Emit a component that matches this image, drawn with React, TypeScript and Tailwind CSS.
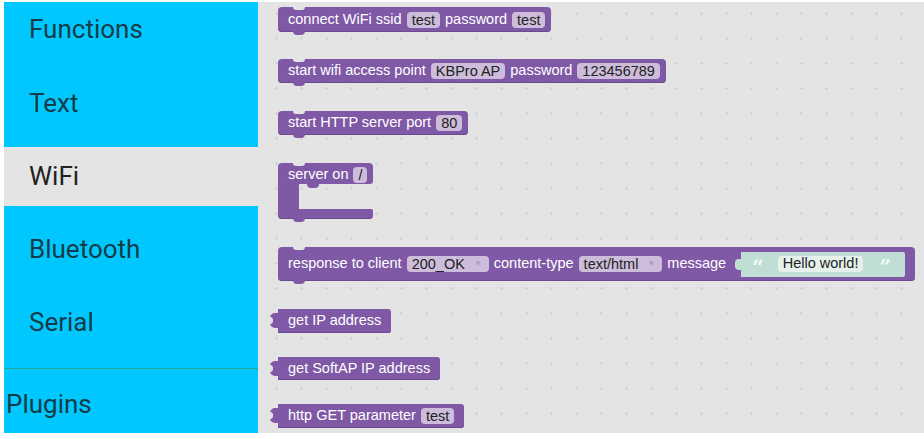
import React from "react";

const Pill = ({ children, arrow }: { children: React.ReactNode; arrow?: boolean }) => (
  <span className="inline-flex items-center h-[16px] rounded-[4px] bg-[#cdbddb] px-[5px] text-[#222] leading-[16px]">
    {children}
    {arrow && <span className="ml-[9px] mr-[2px] text-[8px] text-[#ab9ac3]">▼</span>}
  </span>
);

// statement block: notch on top, bump below
const Stmt = ({ children, h = "h-[25px]", mt }: { children: React.ReactNode; h?: string; mt: string }) => (
  <div className={`relative ${mt} ${h} w-fit flex items-center gap-[5px] rounded-[4px] bg-[#8059a6] pl-[10px] pr-[6px] shadow-[inset_0_-1px_0_#6b4a8f]`}>
    <span className="absolute left-[15px] top-0 w-[12px] h-[3px] rounded-b-[4px] bg-[#e4e4e4]" />
    <span className="absolute left-[15px] -bottom-[3px] w-[12px] h-[4px] rounded-b-[4px] bg-[#8059a6]" />
    {children}
  </div>
);

// value block: output tab on the left
const Value = ({ children, h = "h-[24px]", mt }: { children: React.ReactNode; h?: string; mt: string }) => (
  <div className={`relative ${mt} ${h} w-fit flex items-center gap-[5px] rounded-r-[3px] bg-[#8059a6] pl-[10px] pr-[10px] shadow-[inset_0_-1px_0_#6b4a8f]`}>
    <span className="absolute -left-[8px] top-[4px] w-[9px] h-[15px] rounded-l-[5px] bg-[#8059a6]" />
    <span className="absolute -left-[9px] top-[8px] w-[4px] h-[7px] rounded-r-[3px] bg-[#e4e4e4]" />
    {children}
  </div>
);

export default function App() {
  const menu = "text-[26px] leading-[30px] font-['Roboto',sans-serif]";
  return (
    <div className="w-[924px] h-[439px] bg-white pl-[4px] pt-[2px] pb-[6px] flex">
      {/* toolbox */}
      <div className="w-[254px] h-full flex flex-col">
        <div className="h-[145px] bg-[#00c8ff] pl-[25px] pt-[12px]">
          <div className={`${menu} text-[#143c48]`}>Functions</div>
          <div className={`${menu} text-[#143c48] mt-[44px]`}>Text</div>
        </div>
        <div className="h-[59px] bg-[#e4e4e4] pl-[25px] pt-[14px]">
          <div className={`${menu} text-[#222]`}>WiFi</div>
        </div>
        <div className="h-[162px] bg-[#00c8ff] pl-[25px] pt-[28px]">
          <div className={`${menu} text-[#143c48]`}>Bluetooth</div>
          <div className={`${menu} text-[#143c48] mt-[43px]`}>Serial</div>
        </div>
        <div className="h-[1px] bg-[#2aa79b]" />
        <div className="flex-1 bg-[#00c8ff] pl-[2px] pt-[20px]">
          <div className={`${menu} text-[#143c48]`}>Plugins</div>
        </div>
      </div>

      {/* workspace */}
      <div className="flex-1 h-full bg-[#e4e4e4] bg-[image:radial-gradient(circle,#d0d0d0_1px,transparent_1.5px)] bg-[length:25px_25px] bg-[position:6px_-1px] pl-[20px] flex flex-col font-['Liberation_Sans',Arial,sans-serif] text-[14.5px] text-white whitespace-nowrap">
        <Stmt mt="mt-[5px]">
          <span>connect WiFi ssid</span>
          <Pill>test</Pill>
          <span>password</span>
          <Pill>test</Pill>
        </Stmt>

        <Stmt mt="mt-[27px]" h="h-[24px]">
          <span>start wifi access point</span>
          <Pill>KBPro AP</Pill>
          <span>password</span>
          <Pill>123456789</Pill>
        </Stmt>

        <Stmt mt="mt-[28px]" h="h-[24px]">
          <span>start HTTP server port</span>
          <Pill>80</Pill>
        </Stmt>

        {/* C-shaped block */}
        <div className="relative mt-[28px] w-[95px] h-[56px] flex flex-col">
          <span className="absolute left-[15px] top-0 w-[12px] h-[3px] rounded-b-[4px] bg-[#e4e4e4] z-10" />
          <div className="h-[21px] flex items-center gap-[5px] rounded-t-[4px] rounded-br-[3px] bg-[#8059a6] pl-[10px] pt-[2px]">
            <span>server on</span>
            <Pill>/</Pill>
          </div>
          <div className="flex h-[25px]">
            <div className="w-[21px] bg-[#8059a6]" />
            <div className="relative flex-1 rounded-tl-[6px]">
              <span className="absolute left-[8px] top-0 w-[12px] h-[4px] rounded-b-[4px] bg-[#8059a6]" />
            </div>
          </div>
          <div className="relative h-[10px] rounded-b-[4px] rounded-tr-[2px] bg-[#8059a6] shadow-[inset_0_-1px_0_#6b4a8f]">
            <span className="absolute left-[15px] -bottom-[3px] w-[12px] h-[4px] rounded-b-[4px] bg-[#8059a6]" />
          </div>
        </div>

        <Stmt mt="mt-[28px]" h="h-[34px]">
          <span>response to client</span>
          <Pill arrow>200_OK</Pill>
          <span>content-type</span>
          <Pill arrow>text/html</Pill>
          <span>message</span>
          <div className="relative ml-[10px] mr-[4px] h-[25px] flex items-center rounded-r-[2px] bg-[#c0ded4] pl-[11px] pr-[14px]">
            <span className="absolute -left-[6px] top-[7px] w-[7px] h-[11px] rounded-l-[4px] bg-[#c0ded4]" />
            <span className="font-bold text-[20px] leading-[20px] pt-[6px] text-[#f4fbf8] font-['DejaVu_Serif',serif]">“</span>
            <span className="ml-[14px] inline-flex items-center h-[16px] rounded-[4px] bg-[#e4f1ec] px-[5px] text-[#222]">Hello world!</span>
            <span className="ml-[16px] font-bold text-[20px] leading-[20px] pt-[6px] text-[#f4fbf8] font-['DejaVu_Serif',serif]">”</span>
          </div>
        </Stmt>

        <Value mt="mt-[28px]">
          <span>get IP address</span>
        </Value>

        <Value mt="mt-[24px]" h="h-[23px]">
          <span>get SoftAP IP address</span>
        </Value>

        <Value mt="mt-[24px]">
          <span>http GET parameter</span>
          <Pill>test</Pill>
        </Value>
      </div>
    </div>
  );
}
